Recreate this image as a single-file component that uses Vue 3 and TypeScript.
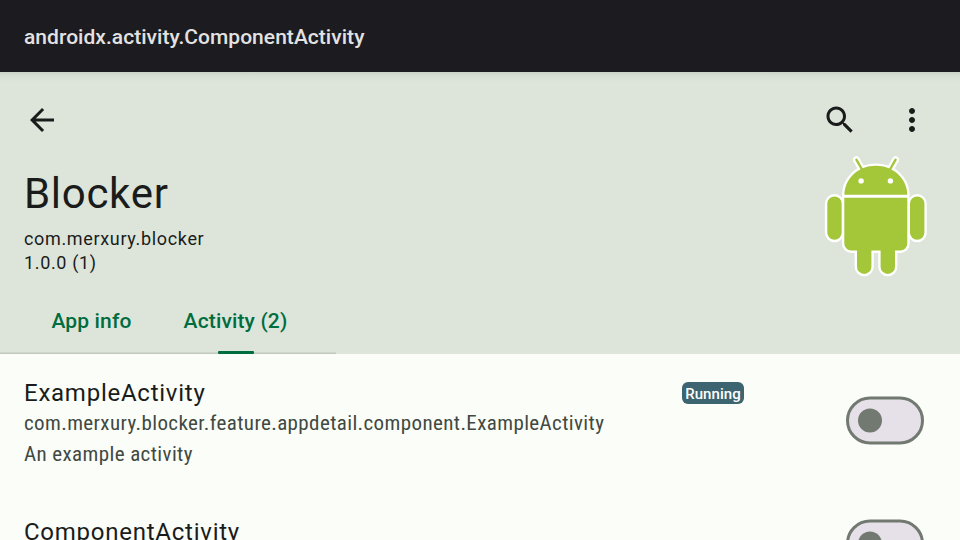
<script setup lang="ts">
interface ComponentItem {
  name: string
  path: string
  description: string
  running: boolean
  enabled: boolean
}

const tabs: { label: string; active: boolean }[] = [
  { label: 'App info', active: false },
  { label: 'Activity (2)', active: true },
]

const items: ComponentItem[] = [
  {
    name: 'ExampleActivity',
    path: 'com.merxury.blocker.feature.appdetail.component.ExampleActivity',
    description: 'An example activity',
    running: true,
    enabled: false,
  },
  { name: 'ComponentActivity', path: '', description: '', running: false, enabled: false },
]
</script>

<template>
  <div class="screen">
    <header class="action-bar"><span class="action-title">androidx.activity.ComponentActivity</span></header>
    <section class="top">
      <div class="toolbar">
        <button class="icon-button" aria-label="Back">
          <svg width="36" height="36" viewBox="0 0 24 24"><path d="M20 11H7.830l5.590-5.590L12 4l-8 8 8 8 1.410-1.410L7.830 13H20v-2z" /></svg>
        </button>
        <span class="spacer"></span>
        <button class="icon-button" aria-label="Search">
          <svg width="36" height="36" viewBox="0 0 24 24"><path d="M15.5 14h-.79l-.28-.27C15.41 12.59 16 11.11 16 9.5 16 5.91 13.09 3 9.5 3S3 5.91 3 9.5 5.91 16 9.5 16c1.61 0 3.09-.59 4.23-1.57l.27.28v.79l5 4.99L20.49 19l-4.99-5zm-6 0C7.01 14 5 11.99 5 9.5S7.01 5 9.5 5 14 7.01 14 9.5 11.99 14 9.5 14z" /></svg>
        </button>
        <button class="icon-button" aria-label="More options">
          <svg width="36" height="36" viewBox="0 0 24 24"><path d="M12 8c1.1 0 2-.9 2-2s-.9-2-2-2-2 .9-2 2 .9 2 2 2zm0 2c-1.1 0-2 .9-2 2s.9 2 2 2 2-.9 2-2-.9-2-2-2zm0 6c-1.1 0-2 .9-2 2s.9 2 2 2 2-.9 2-2-.9-2-2-2z" /></svg>
        </button>
      </div>
      <div class="app-summary">
        <div class="app-text">
          <h1 class="app-name">Blocker</h1>
          <span class="app-meta">com.merxury.blocker</span>
          <span class="app-meta">1.0.0 (1)</span>
        </div>
        <svg class="robot" width="104" height="123" viewBox="0 -0.500 104 123">
          <path class="antenna-outline" d="M32.400 5.200 38.600 16M71.600 5.200 65.400 16" />
          <path class="divider" d="M20.300 41.800h63" />
          <g class="body">
            <rect x="3.300" y="42" width="14.400" height="43.300" rx="7.200" />
            <rect x="86" y="42" width="14.400" height="43.300" rx="7.200" />
            <path d="M20.300 40.300C20.800 24 34 11.300 51.800 11.300S82.800 24 83.300 40.300z" />
            <path d="M20.300 43.300h63v45.700a7 7 0 0 1-7 7h-5.300v16.200a7.200 7.200 0 0 1-14.400 0V96h-9.200v16.200a7.200 7.200 0 0 1-14.400 0V96h-5.700a7 7 0 0 1-7-7z" />
          </g>
          <path class="antenna" d="M32.400 5.200 38.600 16M71.600 5.200 65.400 16" />
          <circle class="eye" cx="37.100" cy="26.400" r="2.700" />
          <circle class="eye" cx="66.400" cy="26.400" r="2.700" />
        </svg>
      </div>
      <nav class="tabs">
        <button v-for="tab in tabs" :key="tab.label" class="tab" :class="{ active: tab.active }">
          <span>{{ tab.label }}</span>
        </button>
      </nav>
    </section>
    <main class="list">
      <article v-for="item in items" :key="item.name" class="item">
        <div class="item-text">
          <div class="item-heading">
            <h2 class="item-name">{{ item.name }}</h2>
            <span v-if="item.running" class="badge">Running</span>
          </div>
          <p v-if="item.path" class="item-detail">{{ item.path }}</p>
          <p v-if="item.description" class="item-detail">{{ item.description }}</p>
        </div>
        <button class="switch" role="switch" :aria-checked="item.enabled" :aria-label="item.name">
          <svg width="78" height="49" viewBox="0 0 78 49">
            <rect class="track" x="1.500" y="2" width="75" height="45" rx="22.500" />
            <circle class="thumb" cx="24" cy="24.500" r="12" />
          </svg>
        </button>
      </article>
    </main>
  </div>
</template>

<style>
body {
  margin: 0;
  overflow: hidden;
}
</style>

<style scoped>
.screen {
  width: 960px;
  height: 540px;
  display: flex;
  flex-direction: column;
  overflow: hidden;
  background: #fbfdf8;
  color: #191c1a;
  font-family: Roboto, sans-serif;
}
button {
  border: 0;
  padding: 0;
  background: none;
  font: inherit;
  color: inherit;
}
h1, h2, p {
  margin: 0;
  font-weight: 400;
}
.action-bar {
  flex: none;
  height: 72px;
  box-sizing: border-box;
  padding: 1px 24px 0;
  display: flex;
  align-items: center;
  background: #1b1b20;
  color: #e3e2e2;
  font-size: 21px;
  font-weight: 500;
  letter-spacing: 0.035px;
}
.top {
  flex: none;
  height: 282px;
  display: flex;
  flex-direction: column;
  background: linear-gradient(#cbd3c9 0, #d6ded4 4px, #dde5db 10px);
}
.toolbar {
  height: 96px;
  box-sizing: border-box;
  padding: 0 12px 0 6px;
  display: flex;
  align-items: center;
}
.icon-button {
  width: 72px;
  height: 72px;
  display: grid;
  place-items: center;
}
.icon-button svg {
  fill: #191c1a;
}
.spacer {
  flex: 1;
}
.app-summary {
  height: 121px;
  padding: 0 32px 0 24px;
  display: flex;
  justify-content: space-between;
  align-items: flex-start;
}
.app-text {
  display: flex;
  flex-direction: column;
}
.app-name {
  height: 58px;
  padding-top: 1px;
  line-height: 50px;
  font-size: 42px;
  letter-spacing: 0.7px;
}
.app-meta {
  line-height: 24px;
  font-size: 18px;
  letter-spacing: 0.66px;
}
.robot {
  margin-top: -14px;
}
.antenna,
.antenna-outline {
  fill: none;
  stroke-linecap: round;
}
.antenna {
  stroke: #a4c639;
  stroke-width: 2.4;
}
.antenna-outline {
  stroke: #fff;
  stroke-width: 7;
}
.divider {
  stroke: #fff;
  stroke-width: 4;
}
.body {
  fill: #a4c639;
  stroke: #fff;
  stroke-width: 4.8;
  stroke-linejoin: round;
  paint-order: stroke;
}
.eye {
  fill: #fff;
}
.tabs {
  height: 65px;
  width: 336px;
  box-sizing: border-box;
  display: flex;
  padding-left: 24px;
  background: linear-gradient(#cfd7cd 1px, #c1c9bf 1px) 0 100% / 100% 2px no-repeat;
}
.tab {
  display: flex;
  flex-direction: column;
  align-items: center;
  justify-content: center;
  width: 135px;
  padding-bottom: 2px;
  color: #006d3f;
  font-size: 21px;
  font-weight: 500;
  letter-spacing: 0.15px;
}
.tab.active {
  width: 153px;
  position: relative;
}
.tab.active::after {
  content: "";
  position: absolute;
  left: 58.500px;
  bottom: 0;
  width: 36px;
  height: 3px;
  border-radius: 1px;
  background: #006d3f;
}
.list {
  display: flex;
  flex-direction: column;
}
.item {
  height: 123px;
  flex: none;
  box-sizing: border-box;
  padding: 24px 36px 0 24px;
  display: flex;
  justify-content: space-between;
}
.item-text {
  width: 720px;
}
.item + .item .item-text {
  padding-top: 16px;
}
.item-heading {
  display: flex;
  justify-content: space-between;
  height: 30px;
}
.item-name {
  font-size: 24px;
  line-height: 30px;
  letter-spacing: 0.75px;
}
.item-detail {
  color: #414942;
  font-family: "Roboto Condensed", Roboto, sans-serif;
  font-stretch: 75%;
  font-size: 21px;
  line-height: 31px;
  letter-spacing: 0.39px;
}
.badge {
  box-sizing: border-box;
  width: 62px;
  height: 22px;
  margin-top: 4px;
  border-radius: 6px;
  background: #3c6471;
  color: #fff;
  font-size: 15px;
  font-weight: 500;
  line-height: 24px;
  letter-spacing: 0.05px;
  text-align: center;
}
.switch {
  width: 78px;
  height: 49px;
  flex: none;
  margin-top: 18px;
}
.switch svg {
  display: block;
}
.track {
  fill: #e6e0e9;
  stroke: #717971;
  stroke-width: 3;
}
.thumb {
  fill: #717971;
}
</style>
